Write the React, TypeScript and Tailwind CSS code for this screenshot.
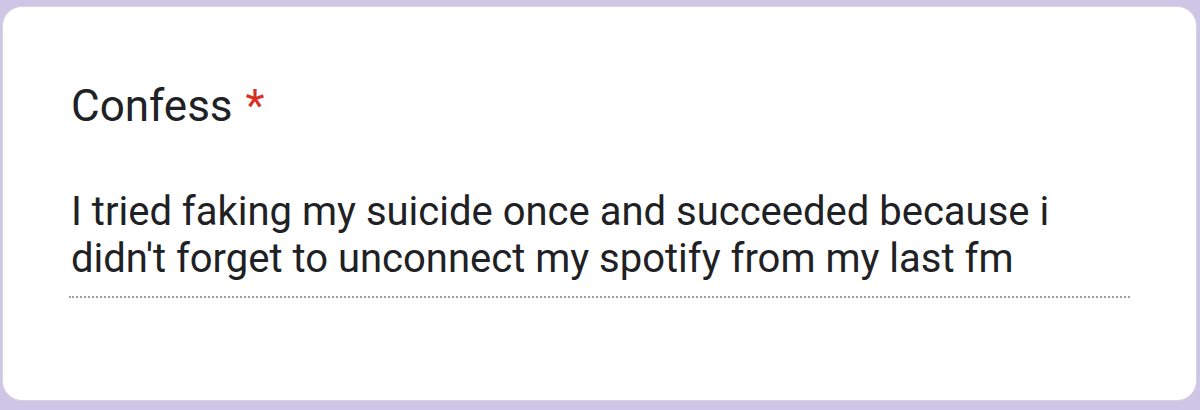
export default function App() {
  return (
    <div className="h-[410px] w-[1200px] bg-[#cdc6e7] pt-[6px] pl-[2px] pr-[3px] pb-[9px] font-['Roboto',sans-serif]">
      <div className="h-full rounded-[20px] border border-[#d6d4dc] bg-white pl-[68px] pr-[66px] pt-[73px]">
        {/* Question title */}
        <div className="text-[44px] leading-[52px] text-[#202124]">
          Confess <span className="ml-[2px] text-[#d93025]">*</span>
        </div>

        {/* Answer */}
        <div className="-ml-[2px] mt-[56px] border-b-2 border-dotted border-[#9aa0a6] pb-[14px] pl-[2px] text-[40px] leading-[47px] text-[#202124]">
          <span className="block">I tried faking my suicide once and succeeded because i</span>
          <span className="block">didn't forget to unconnect my spotify from my last fm</span>
        </div>
      </div>
    </div>
  );
}
